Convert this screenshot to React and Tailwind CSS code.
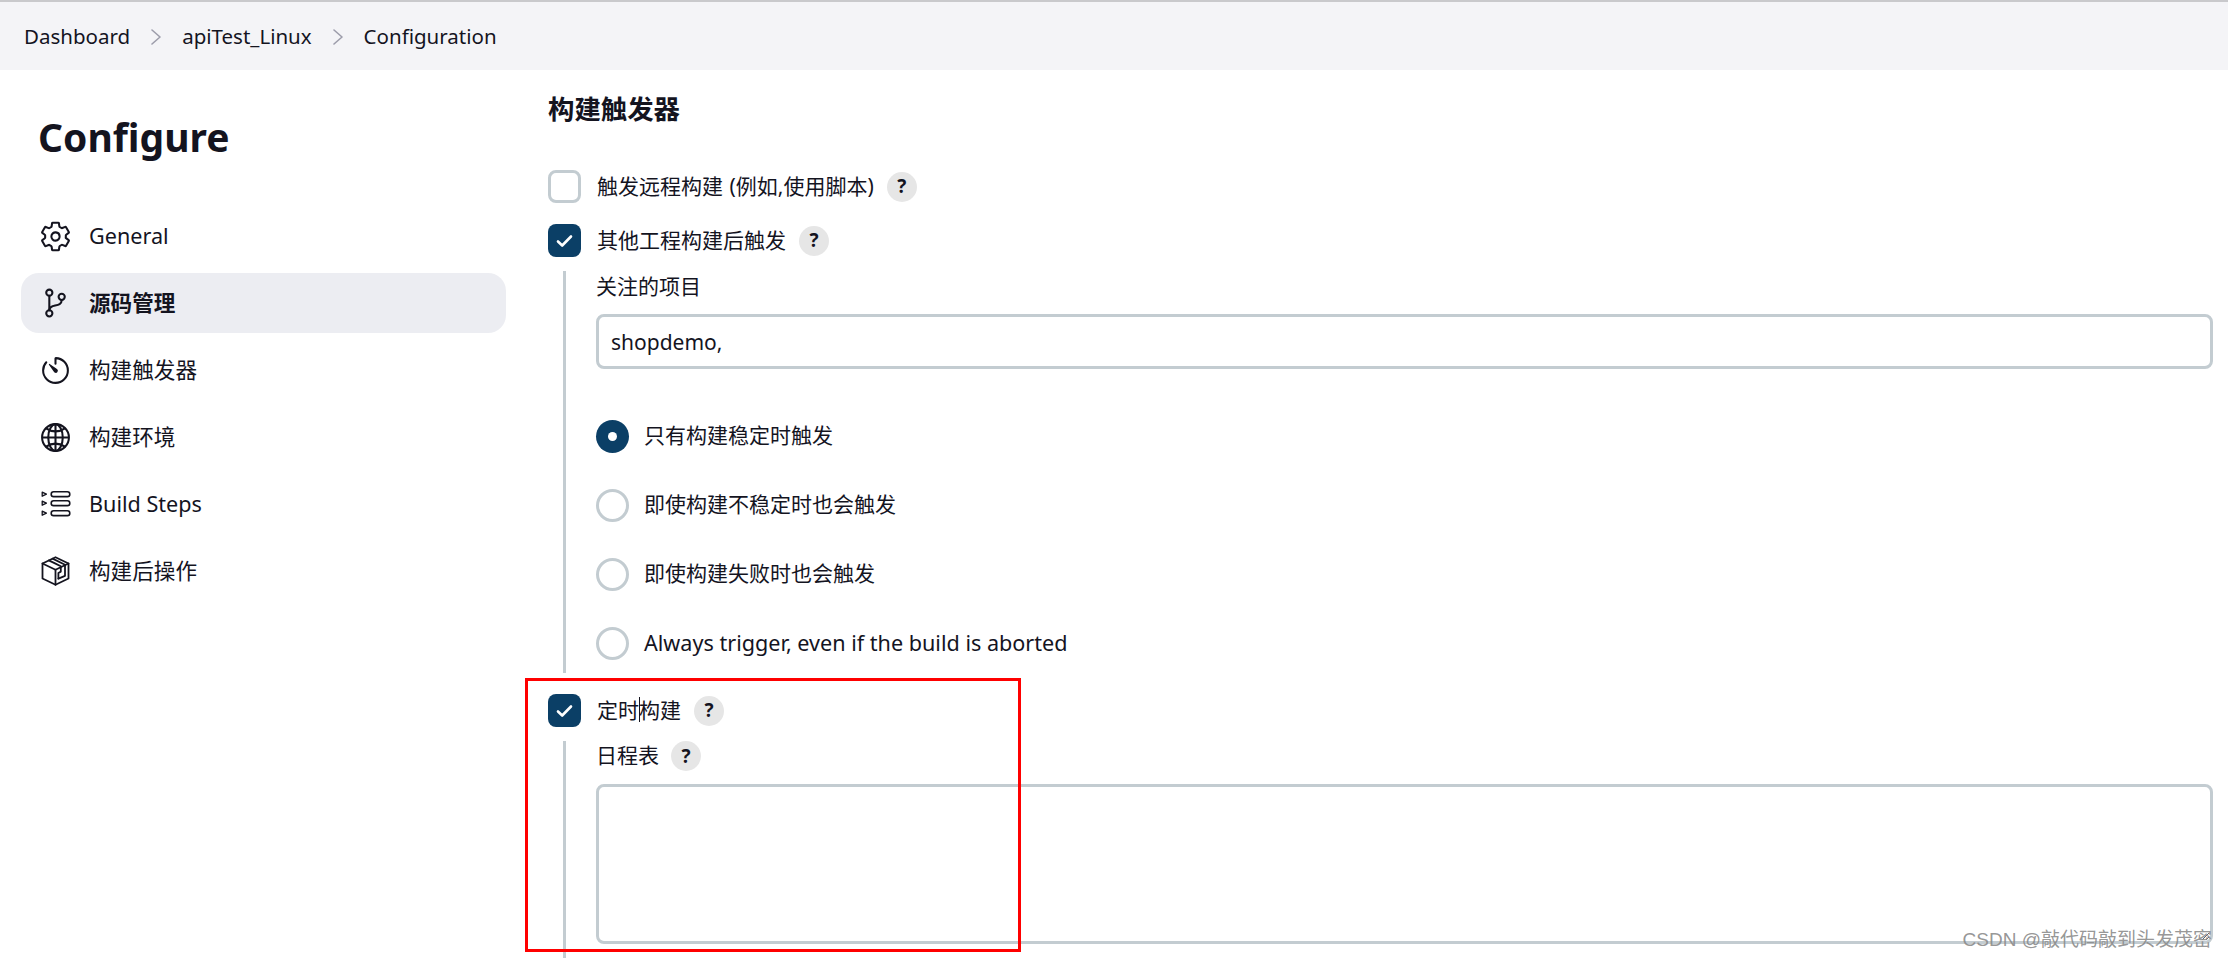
import React from "react";
import { IoSettingsOutline, IoGitBranchOutline, IoTimerOutline, IoGlobeOutline } from "react-icons/io5";

const STACK = { fontFamily: '"Noto Sans", "Noto Sans CJK SC", sans-serif' };

function Chevron() {
  return (
    <svg width="10" height="16" viewBox="0 0 10 16" fill="none" stroke="#9d9dab" strokeWidth="1.6" strokeLinecap="round" strokeLinejoin="round">
      <polyline points="1,1 9,8 1,15" />
    </svg>
  );
}

function StepsIcon() {
  return (
    <svg width="30" height="28" viewBox="0 0 30 28" fill="none" stroke="#14141f" strokeWidth="1.6" strokeLinejoin="round">
      <rect x="10.2" y="1.8" width="18.6" height="4.8" rx="2.4" />
      <rect x="10.2" y="10.8" width="18.6" height="4.8" rx="2.4" />
      <rect x="10.2" y="20.8" width="18.6" height="4.8" rx="2.4" />
      <path d="M1.2 2.2 L5.4 4.2 L1.2 6.2 Z" strokeWidth="1.3" />
      <path d="M1.2 11.2 L5.4 13.2 L1.2 15.2 Z" strokeWidth="1.3" />
      <path d="M1.2 21.2 L5.4 23.2 L1.2 25.2 Z" strokeWidth="1.3" />
    </svg>
  );
}

function BoxIcon() {
  return (
    <svg width="29" height="30" viewBox="0 0 29 30" fill="none" stroke="#14141f" strokeWidth="1.8" strokeLinejoin="round" strokeLinecap="round">
      <path d="M14.5 1.2 L27.5 7.5 V22.5 L14.5 28.8 L1.5 22.5 V7.5 Z" />
      <path d="M1.5 7.5 L14.5 13.8 L27.5 7.5" />
      <path d="M14.5 13.8 V28.8" />
      <path d="M7.8 4.4 L14 7.4 L19.8 10.2 V15.6 L17.4 17 V22.6" />
      <path d="M11.6 2.6 L24 8.8 V19.8 L17.4 22.6" />
    </svg>
  );
}

function Check() {
  return (
    <svg width="17" height="14" viewBox="0 0 17 14" fill="none" stroke="#fff" strokeWidth="2.6" strokeLinecap="round" strokeLinejoin="round">
      <polyline points="2,7.5 6.2,11.5 15,2.5" />
    </svg>
  );
}

function Help() {
  return (
    <span className="flex h-[30px] w-[30px] shrink-0 items-center justify-center rounded-full bg-[#e6e6e6] text-[19px] font-bold text-[#14141f]">?</span>
  );
}

function Checkbox({ checked, label, spaced }) {
  return (
    <div className="flex h-[33px] items-center">
      {checked ? (
        <span className="flex h-[33px] w-[33px] shrink-0 items-center justify-center rounded-[8px] bg-[#0b3f66]">
          <Check />
        </span>
      ) : (
        <span className="h-[33px] w-[33px] shrink-0 rounded-[8px] border-[3px] border-[#c3ccd1] bg-white" />
      )}
      <span className={`ml-[16px] mr-[13px] text-[21px] leading-[33px] ${spaced ? "[word-spacing:1px]" : ""}`}>{label}</span>
      <Help />
    </div>
  );
}

function Radio({ checked, label, latin }) {
  return (
    <div className="flex h-[33px] items-center">
      {checked ? (
        <span className="flex h-[33px] w-[33px] shrink-0 items-center justify-center rounded-full bg-[#0b3f66]">
          <span className="h-[9px] w-[9px] rounded-full bg-white" />
        </span>
      ) : (
        <span className="h-[33px] w-[33px] shrink-0 rounded-full border-[3px] border-[#c3ccd1] bg-white" />
      )}
      <span className={`mb-[2px] ml-[15px] leading-[31px] ${latin ? "text-[21.6px]" : "text-[21px]"}`}>{label}</span>
    </div>
  );
}

const NAV = [
  { icon: <IoSettingsOutline size={33} />, label: "General" },
  { icon: <IoGitBranchOutline size={38} />, label: "源码管理", active: true },
  { icon: <IoTimerOutline size={33} />, label: "构建触发器" },
  { icon: <IoGlobeOutline size={35} />, label: "构建环境" },
  { icon: <StepsIcon />, label: "Build Steps" },
  { icon: <BoxIcon />, label: "构建后操作" },
];

export default function App() {
  return (
    <div className="relative h-[958px] w-[2228px] overflow-hidden bg-white text-[#14141f]" style={STACK}>
      <nav className="flex h-[70px] items-center gap-[21px] border-t-2 border-[#c9c9cc] bg-[#f4f4f7] pl-[24px] pt-[1px] text-[20.5px]">
        <span>Dashboard</span>
        <Chevron />
        <span>apiTest_Linux</span>
        <Chevron />
        <span>Configuration</span>
      </nav>

      <div className="flex">
        <aside className="w-[548px] shrink-0 pl-[21px] pr-[42px] pt-[39px]">
          <h1 className="h-[56px] pl-[17px] text-[39px] font-bold leading-[56px]">Configure</h1>
          <ul className="mt-[41px] flex flex-col gap-[7px]">
            {NAV.map((n) => (
              <li
                key={n.label}
                className={`flex h-[60px] items-center gap-[17px] rounded-[18px] pl-[18px] text-[21.6px] ${n.active ? "bg-[#ecedf2] font-bold" : ""}`}
              >
                <span className="flex h-[38px] w-[33px] items-center justify-center">{n.icon}</span>
                <span>{n.label}</span>
              </li>
            ))}
          </ul>
        </aside>

        <main className="relative min-w-0 flex-1 pr-[15px]">
          <h2 className="mt-[21px] h-[36px] text-[26.4px] font-bold leading-[36px]">构建触发器</h2>
          <div className="mt-[43px]">
            <Checkbox spaced label="触发远程构建 (例如,使用脚本)" />
          </div>
          <div className="mt-[21px]">
            <Checkbox checked label="其他工程构建后触发" />
          </div>

          <div className="ml-[15px] mt-[14px] border-l-[3px] border-[#c3ccd1] pb-[13px] pl-[30px]">
            <div className="h-[30px] text-[21px] leading-[30px]">关注的项目</div>
            <input
              readOnly
              value="shopdemo,"
              className="mt-[13px] block h-[55px] w-full rounded-[8px] border-[3px] border-[#c3ccd1] bg-white px-[12px] text-[21px] outline-none"
            />
            <div className="mt-[51px] flex flex-col gap-[36px]">
              <Radio checked label="只有构建稳定时触发" />
              <Radio label="即使构建不稳定时也会触发" />
              <Radio label="即使构建失败时也会触发" />
              <Radio latin label="Always trigger, even if the build is aborted" />
            </div>
          </div>

          <div className="mt-[21px]">
            <Checkbox checked label="定时构建" />
          </div>

          <div className="ml-[15px] mt-[14px] border-l-[3px] border-[#c3ccd1] pb-[20px] pl-[30px]">
            <div className="flex h-[30px] items-center gap-[12px] text-[21px]">
              <span>日程表</span>
              <Help />
            </div>
            <textarea
              readOnly
              className="mt-[13px] block h-[160px] w-full rounded-[8px] border-[3px] border-[#c3ccd1] bg-white outline-none"
            />
          </div>

          <span className="absolute left-[91px] top-[627px] h-[25px] w-px bg-[#14141f]" />
        </main>
      </div>

      <div className="pointer-events-none absolute left-[525px] top-[678px] h-[274px] w-[496px] border-[3px] border-[#ff0000]" />
      <span
        className="pointer-events-none absolute right-[16px] top-[926px] text-[19px] leading-[28px] text-[#8a8a8a]/90"
        style={{ fontFamily: '"Liberation Sans", "Noto Sans CJK SC", sans-serif' }}
      >
        CSDN @敲代码敲到头发茂密
      </span>
    </div>
  );
}
